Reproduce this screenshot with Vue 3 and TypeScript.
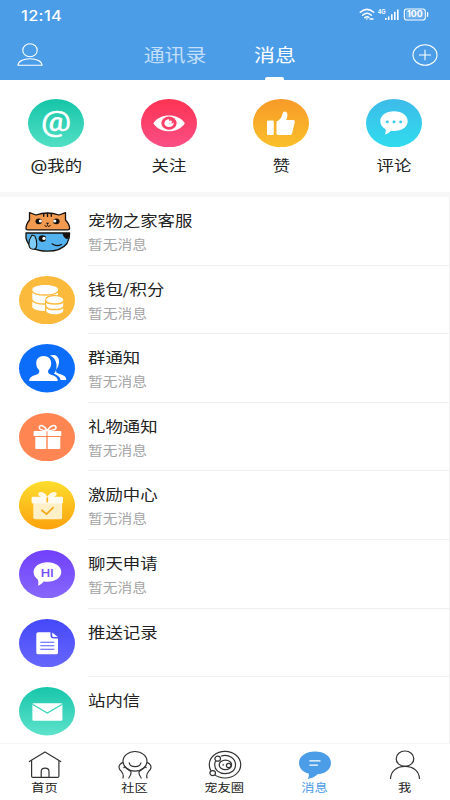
<script setup lang="ts">
import { ref } from 'vue'

interface Entry {
  id: string
  label: string
  from: string
  to: string
}

interface Row extends Entry {
  note: string
}

const actions: Entry[] = [
  { id: 'at', label: '@我的', from: '#16c5a8', to: '#51dfc5' },
  { id: 'eye', label: '关注', from: '#fc3352', to: '#fb4f86' },
  { id: 'like', label: '赞', from: '#f79a28', to: '#fac02a' },
  { id: 'comment', label: '评论', from: '#3dbbe9', to: '#30dcee' },
]

const rows: Row[] = [
  { id: 'pets', label: '宠物之家客服', note: '暂无消息', from: '', to: '' },
  { id: 'coins', label: '钱包/积分', note: '暂无消息', from: '#fcba3d', to: '#fcba3d' },
  { id: 'group', label: '群通知', note: '暂无消息', from: '#0d6dfb', to: '#0d6dfb' },
  { id: 'gift', label: '礼物通知', note: '暂无消息', from: '#ff8652', to: '#ff8652' },
  { id: 'reward', label: '激励中心', note: '暂无消息', from: '#fddd2d', to: '#fca20e' },
  { id: 'hi', label: '聊天申请', note: '暂无消息', from: '#713ffa', to: '#8668fc' },
  { id: 'doc', label: '推送记录', note: '', from: '#4548f8', to: '#6767fc' },
  { id: 'mail', label: '站内信', note: '', from: '#18c6aa', to: '#5de2cb' },
]

const tabs = [
  { id: 'home', label: '首页' },
  { id: 'community', label: '社区' },
  { id: 'circle', label: '宠友圈' },
  { id: 'message', label: '消息' },
  { id: 'me', label: '我' },
]

const active = ref('message')
</script>

<template>
  <div class="screen">
    <header class="header">
      <div class="status">
        <span class="time">12:14</span>
        <svg class="signals" width="74" height="16" viewBox="0 0 74 16">
          <g fill="none" stroke="#fff" stroke-width="1.5" stroke-linecap="round">
            <path d="M2.3 5.3Q9 -.6 15.7 5.3M4.6 8.2Q9 4.2 13.4 8.2M6.8 10.7Q9 9 10.8 10.4" />
          </g>
          <path d="M7.4 11.4h2.800L8.800 13zM11.500 11.200h4v1.600h-4z" fill="#fff" />
          <text x="20" y="7" class="net" textLength="7.500" lengthAdjust="spacingAndGlyphs">4G</text>
          <path d="M27 11h1.600v2H27zM29.900 9.400h1.600V13h-1.600zM33 7.200h1.600V13H33zM36 4.800h1.600V13H36zM39 2.400h1.600V13H39z" fill="#fff" />
          <rect x="46.300" y="2" width="21" height="11" rx="2.600" fill="none" stroke="#fff" stroke-width="1.100" />
          <rect x="48" y="3.600" width="17.600" height="7.800" rx="1.200" fill="#fff" opacity=".22" />
          <path d="M69.600 5.200v4.600" stroke="#fff" stroke-width="1.300" />
          <text x="49" y="10.400" class="level" textLength="15.600" lengthAdjust="spacingAndGlyphs">100</text>
        </svg>
      </div>
      <div class="topbar">
        <svg class="person" width="26" height="24" viewBox="0 0 26 24" fill="none" stroke="#fff" stroke-width="1.100">
          <ellipse cx="13" cy="7.200" rx="7.200" ry="6.500" />
          <path d="M1 22.300c0-4 5.400-6.600 12-6.600s12 2.600 12 6.600z" stroke-linejoin="round" />
        </svg>
        <div class="switch">
          <span class="switch-item"><span class="wide">通讯录</span></span>
          <span class="switch-item on"><span class="wide">消息</span></span>
        </div>
        <svg class="plus" width="26" height="22" viewBox="0 0 26 22" fill="none" stroke="#fff" stroke-width="1.100">
          <ellipse cx="13" cy="11" rx="12" ry="10.200" />
          <path d="M7 11h12M13 5.700v10.600" />
        </svg>
      </div>
    </header>

    <section class="actions">
      <div v-for="a in actions" :key="a.id" class="action">
        <svg width="56" height="48.500" viewBox="0 0 56 48.500">
          <defs>
            <linearGradient :id="'g-' + a.id" x1="0" y1="0" x2="0" y2="1">
              <stop offset="0" :stop-color="a.from" />
              <stop offset="1" :stop-color="a.to" />
            </linearGradient>
          </defs>
          <ellipse cx="28" cy="24.200" rx="28" ry="24.200" :fill="`url(#g-${a.id})`" />
          <text v-if="a.id === 'at'" x="13" y="31.800" class="at" textLength="30" lengthAdjust="spacingAndGlyphs">@</text>
          <g v-else-if="a.id === 'eye'">
            <path d="M12.300 24.200C19 13.900 37 13.900 43.900 24.200 37 34.900 19 34.900 12.300 24.200z" fill="#fff" />
            <ellipse cx="28" cy="24.200" rx="7.600" ry="6.600" fill="#fc4068" />
            <ellipse cx="28" cy="24.200" rx="4.600" ry="3.900" fill="#fff" />
            <path d="M28 24.200V20q4.600 0 4.600 4.200z" fill="#fc4068" />
            <ellipse cx="29.400" cy="22.900" rx="1.500" ry="1.300" fill="#fff" />
          </g>
          <g v-else-if="a.id === 'like'" fill="#fff">
            <rect x="14" y="21.400" width="6.800" height="14.600" rx="1.200" />
            <path d="M23.500 34.700V22.600c3.200-1.700 5.400-4.100 5.900-7.400.3-1.900 1.200-2.700 2.400-2.700 2.900 0 3.400 3.900 1.500 8.400h6.800c1.300 0 2 .8 1.700 2l-2.600 11c-.4 1.400-1 2-2.500 2H25c-1 0-1.500-.4-1.500-1.200z" />
          </g>
          <g v-else>
            <path d="M28 12.300c7.800 0 13.700 4.100 13.700 9.900S35.800 32 28 32c-1 0-2-.1-3-.2-1.800 2-4 3.200-6.300 3.600 1-1.600 1.300-3.300.9-5.200-3.300-1.800-5.300-4.700-5.300-8C14.300 16.400 20.200 12.300 28 12.300z" fill="#fff" />
            <g fill="#37c9eb">
              <ellipse cx="21.300" cy="22.900" rx="1.500" ry="1.300" />
              <ellipse cx="28" cy="22.900" rx="1.500" ry="1.300" />
              <ellipse cx="34.700" cy="22.900" rx="1.500" ry="1.300" />
            </g>
          </g>
        </svg>
        <span class="action-label wide">{{ a.label }}</span>
      </div>
    </section>

    <main class="list">
      <div v-for="r in rows" :key="r.id" class="row">
        <svg class="row-icon" width="56" height="48.500" viewBox="0 0 56 48.500">
          <template v-if="r.id === 'pets'">
            <g stroke="#17120f" stroke-width="1.300" stroke-linejoin="round" stroke-linecap="round">
              <path d="M10.500 13V5.600L17 8Q28.500 4 40 8L46.500 5.600V13Q50.600 17.500 50.600 21.200 50.600 22.800 48.500 22.800H9Q7 22.800 7 21.200 7 17.500 10.500 13z" fill="#f29b50" />
              <path d="M24.700 6.600v2.600M28.500 6.400v3M32.300 6.600v2.600" fill="none" stroke-width="1.400" />
              <path d="M7 26h43.600Q51 31 48 36.500 42 44.200 28.500 44.200 10 44.200 7 31z" fill="#54b3ef" />
              <path d="M13 28C8.700 34 8.700 42 14 42.300 19 42.500 18.500 34 15.800 29z" fill="#7dccf7" stroke-width="1.100" />
              <path d="M33 36.800q4.600 3.300 9.400.600" fill="none" stroke-width="1.100" />
              <path d="M25.700 18.600q1.600 2 2.800 0 1.200 2 2.900 0" fill="none" stroke-width="1" />
            </g>
            <path d="M43.500 26h7.200q.4 5-2.600 6.200-4.200-1.800-4.600-6.200zM27 15.800h3L28.500 18z" fill="#17120f" />
            <g>
              <ellipse cx="19.800" cy="14.300" rx="3.300" ry="2.900" fill="#17120f" />
              <ellipse cx="37.300" cy="14.300" rx="3.300" ry="2.900" fill="#17120f" />
              <ellipse cx="23.400" cy="31.600" rx="3.700" ry="3.300" fill="#17120f" />
              <ellipse cx="21.400" cy="14" rx="1.600" ry="1.500" fill="#fff" />
              <ellipse cx="35.700" cy="14" rx="1.600" ry="1.500" fill="#fff" />
              <ellipse cx="25" cy="31.400" rx="1.700" ry="1.600" fill="#fff" />
            </g>
          </template>
          <template v-else>
            <defs>
              <linearGradient :id="'g-' + r.id" x1="0" y1="0" x2="0" y2="1">
                <stop offset="0" :stop-color="r.from" />
                <stop offset="1" :stop-color="r.to" />
              </linearGradient>
            </defs>
            <ellipse cx="28" cy="24.200" rx="28" ry="24.200" :fill="`url(#g-${r.id})`" />
          </template>

          <g v-if="r.id === 'coins'">
            <path d="M13.300 13.500C13.300 7.500 39 7.500 39 13.500V30.500C39 36.500 13.300 36.500 13.300 30.500z" fill="#fff" />
            <path d="M13 14.600C14.500 20.600 37.800 20.600 39.300 14.600M13 23.600C14.500 29.600 37.800 29.600 39.300 23.600" fill="none" stroke="#fcba3d" stroke-width="1.500" />
            <path d="M27.300 24C27.300 19 44.200 19 44.200 24V34.500C44.200 39.500 27.300 39.500 27.300 34.500z" fill="#fff" stroke="#fcba3d" stroke-width="2.600" paint-order="stroke" />
            <path d="M27 25C28 29 43.500 29 44.500 25M27 30.500C28 34.600 43.500 34.600 44.500 30.500" fill="none" stroke="#fcba3d" stroke-width="1.400" />
          </g>
          <g v-else-if="r.id === 'group'" fill="#fff">
            <path d="M31 11.700c5-2.200 9.200.6 9 6.300-.1 3.600-1.400 5.700-2.800 7.400-.5 2.300.1 3.300 2 4.200 4.200 1.500 8 2.100 8.100 6.300h-5.800c-.3-3-3.300-4.800-6.600-6.100 4.100-4 4-15.600-3.900-18.100z" />
            <path d="M24.700 12c4.700 0 7.500 2.900 7.500 7.300 0 2.900-1.100 5.200-3 6.900-.4 2.400.2 3.400 2.200 4.200 4 1.500 7.400 2.200 7.400 6.600H10.200c0-4.400 3.600-5.100 7.700-6.600 1.900-.8 2.700-1.800 2.300-4.200-1.800-1.700-3-4-3-6.900 0-4.400 2.800-7.300 7.500-7.300z" stroke="#0d6dfb" stroke-width="2.400" paint-order="stroke" />
          </g>
          <g v-else-if="r.id === 'gift'">
            <path d="M15.400 17.900h12.100v5.200H14.600v-4.400q0-.8.800-.8zM28.500 17.900h13q.8 0 .8.800v4.400H28.500zM16.300 24h11v12H17.200q-.9 0-.9-.8zM28.700 24h12.600v11.200q0 .8-.9.800H28.700z" fill="#fff" />
            <path d="M28.300 17.600C25 12.300 21 11.300 20.300 14c-.5 2.300 2.500 3.600 8 3.600C31.500 12.300 36 11.300 37 14c.6 2.300-2.700 3.600-8.700 3.600z" fill="none" stroke="#fff" stroke-width="1.500" />
          </g>
          <g v-else-if="r.id === 'reward'">
            <path d="M27.500 17C18 17 17.500 11 21.800 11 25 11 28 14 28.300 16.500 29 14 32 11 35.200 11 39.500 11 39 17 29 17z" fill="#fff8e5" />
            <path d="M14.300 21h28.800v15.200q0 2-2.200 2H16.500q-2.200 0-2.200-2z" fill="#fff0c8" />
            <rect x="12.600" y="15.700" width="31.400" height="6.700" rx="1.400" fill="#fffaf0" />
            <path d="M28.300 16.400v5" stroke="#fdb51c" stroke-width="1.700" />
            <path d="M22.800 29.300l4.700 3.800 6.600-6.400" fill="none" stroke="#fda71a" stroke-width="1.800" stroke-linecap="round" stroke-linejoin="round" />
          </g>
          <g v-else-if="r.id === 'hi'">
            <path d="M28.500 12.300c8 0 13.800 4.200 13.800 9.800s-5.800 9.600-13.800 9.600c-1.400 0-2.700-.1-3.900-.3-1.600 2-3.300 3.300-5.600 4.300.5-1.700.5-3.800 0-6-2.900-1.800-4.400-4.500-4.400-7.600 0-5.600 5.900-9.800 13.900-9.800z" fill="#fff" />
            <text x="21.700" y="27" class="hi" textLength="13.200" lengthAdjust="spacingAndGlyphs">HI</text>
          </g>
          <g v-else-if="r.id === 'doc'">
            <path d="M19.300 13.200H31.500v3.300q0 2.900 3.400 2.900H39v14q0 1.900-2 1.900H19.300q-2 0-2-1.900V15q0-1.800 2-1.800zM33.200 13.400l5.600 4.600h-3.700q-1.900 0-1.900-1.600z" fill="#fff" />
            <path d="M21.300 23.200h14M21.300 26.700h14M21.300 30.200h14" stroke="#5355fa" stroke-width="1.100" />
          </g>
          <g v-else-if="r.id === 'mail'">
            <rect x="13.400" y="16.300" width="30" height="17.400" rx="1.200" fill="#fff" />
            <path d="M13.400 17.300l14.900 8.800 15-8.800" fill="none" stroke="#37d3ba" stroke-width="1.300" />
          </g>
        </svg>
        <div class="row-text">
          <span class="title wide">{{ r.label }}</span>
          <span class="note wide">{{ r.note }}</span>
        </div>
      </div>
    </main>

    <nav class="nav">
      <div v-for="t in tabs" :key="t.id" class="tab" :class="{ active: t.id === active }" @click="active = t.id">
        <svg width="34" height="30" viewBox="0 0 34 30" fill="none" stroke="#333" stroke-width="1.200" stroke-linecap="round" stroke-linejoin="round">
          <path v-if="t.id === 'home'" d="M1.300 11.500L17 1.900 32.700 11.500M3.600 10.400V26.200q0 1.200 1.400 1.200H29.500q1.400 0 1.400-1.200V10.400M13.200 27.400V21.500q0-3.400 3.900-3.400t3.900 3.400v5.900" />
          <g v-else-if="t.id === 'community'">
            <ellipse cx="17" cy="11.300" rx="12" ry="9.800" />
            <path d="M11.200 12.800c1 5 10.600 5 11.700 0M4.800 12.600C1.400 13.600.4 16.600 1.500 19 2.500 21.300 6.600 22.800 5 28M29.200 12.600c3.400 1 4.400 4 3.300 6.400-1 2.300-5.100 3.800-3.500 9M5.800 17.600q1-1.200 2.500.4l4.500 3.400q1 2.800-2 6.600M28.200 17.600q-1-1.200-2.500.4l-4.500 3.400q-1 2.800 2 6.600" />
          </g>
          <g v-else-if="t.id === 'circle'">
            <ellipse cx="17" cy="14.700" rx="15.700" ry="13.300" />
            <path d="M13.300 6C21 3.800 27.500 8.800 27.500 14.800S22.500 23.700 17 23.700C11 23.700 6.700 19.800 6.700 15q0-2 .7-3.400" />
            <ellipse cx="17.400" cy="14.900" rx="6.200" ry="4.800" />
            <ellipse cx="9.700" cy="8.700" rx="2.800" ry="2.500" fill="#fff" />
            <ellipse cx="4.700" cy="23.100" rx="2.800" ry="2.500" fill="#fff" />
            <ellipse cx="20.700" cy="15.400" rx="2.300" ry="2.100" fill="#fff" />
            <path d="M14.900 14.900h.7" />
          </g>
          <g v-else-if="t.id === 'message'">
            <path d="M17 1.400c9 0 16 4.700 16 11.500s-6.500 11-13.500 11.300c-2.600 2.600-6 4.200-9.800 4.700q1.700-2.600.9-5.300C4.900 22 1 18 1 12.900 1 6.100 8 1.400 17 1.400z" fill="#4b9de8" stroke="none" />
            <path d="M11.900 10.900H22M11.900 15.200h7.600" stroke="#fff" stroke-width="1.300" />
          </g>
          <g v-else>
            <ellipse cx="17" cy="8.700" rx="8.800" ry="7.700" />
            <path d="M2.500 28.500c.5-6.800 5.500-12.100 14.500-12.100s14 5.300 14.500 12.100" />
          </g>
        </svg>
        <span class="tab-label wide">{{ t.label }}</span>
      </div>
    </nav>
  </div>
</template>

<style>
body {
  margin: 0;
  background: #fff;
}
</style>

<style scoped>
.screen {
  width: 450px;
  height: 800px;
  display: flex;
  flex-direction: column;
  overflow: hidden;
  background: #fff;
  font-family: "Noto Sans CJK SC", sans-serif;
  color: #222;
}
.wide {
  display: inline-block;
  transform: scaleX(1.160);
  white-space: nowrap;
}
.header {
  flex: none;
  height: 80px;
  background: #4b9de8;
  color: #fff;
}
.status {
  height: 30px;
  display: flex;
  justify-content: space-between;
  padding: 0 18.500px 0 21px;
}
.time {
  font: 500 14.500px/31px Inter, sans-serif;
  letter-spacing: .3px;
  transform: scaleX(1.130);
  transform-origin: left;
}
.signals {
  margin-top: 7px;
}
.net {
  font: 700 6.500px "Liberation Sans", sans-serif;
  fill: #fff;
}
.level {
  font: 700 8.500px Inter, sans-serif;
  fill: #fff;
}
.topbar {
  height: 50px;
  display: grid;
  grid-template-columns: 26px 1fr 26px;
  padding: 0 12px 0 17px;
}
.person {
  margin-top: 13px;
}
.plus {
  margin-top: 14px;
}
.switch {
  display: flex;
  gap: 47px;
  padding-left: 100.500px;
}
.switch-item {
  display: flex;
  flex-direction: column;
  align-items: center;
  justify-content: space-between;
  min-width: 42px;
  font-size: 18px;
  line-height: 48.500px;
  height: 50px;
}
.switch-item:first-child {
  width: 63px;
  color: #c3def8;
}
.switch-item .wide {
  height: 47px;
}
.on::after {
  content: "";
  width: 19px;
  height: 3px;
  border-radius: 2px 2px 0 0;
  background: #fff;
}
.actions {
  flex: none;
  height: 112px;
  display: grid;
  grid-template-columns: repeat(4, 112.500px);
  border-bottom: 5px solid #f7f7f7;
}
.action {
  display: flex;
  flex-direction: column;
  align-items: center;
  padding-top: 18.500px;
}
.action svg,
.row-icon {
  flex: none;
}
.action-label {
  font-family: Inter, "Noto Sans CJK SC", sans-serif;
  font-size: 15px;
  line-height: 20px;
  margin-top: 8.500px;
}
.list {
  flex: none;
  height: 546px;
  overflow: hidden;
  box-sizing: border-box;
  border-right: 1px solid #f2f2f2;
}
.row {
  height: 68.600px;
  display: flex;
  align-items: flex-start;
  padding-left: 18.700px;
}
.row-icon {
  margin-top: 10px;
}
.row-text {
  flex: 1;
  height: 68.600px;
  box-sizing: border-box;
  margin-left: 13px;
  padding-top: 12px;
  border-bottom: 1px solid #eee;
  display: flex;
  flex-direction: column;
  align-items: flex-start;
}
.row:last-child .row-text {
  border-bottom: 0;
}
.row-text .wide {
  transform-origin: left;
}
.title {
  font-size: 15px;
  line-height: 22px;
}
.note {
  font-size: 12.700px;
  line-height: 20px;
  margin-top: 3px;
  color: #a5a5a5;
}
.nav {
  flex: 1;
  display: grid;
  grid-template-columns: repeat(5, 90px);
  border-top: 1px solid #f5f5f5;
  background: #fff;
  margin-left: -.5px;
}
.tab {
  display: flex;
  flex-direction: column;
  align-items: center;
  padding-top: 6px;
}
.tab svg {
  flex: none;
}
.tab-label {
  font-size: 11.400px;
  line-height: 16px;
  margin-top: -.6px;
}
.active {
  color: #4b9de8;
}
.at {
  font: 400 27px Roboto, sans-serif;
  fill: #fff;
  stroke: #fff;
  stroke-width: .5px;
}
.hi {
  font: 500 10px Roboto, sans-serif;
  fill: #7a50fb;
}
</style>
